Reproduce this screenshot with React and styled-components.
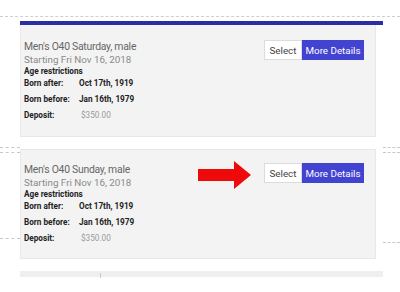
import React from "react";
import styled, { createGlobalStyle } from "styled-components";

const Global = createGlobalStyle`
  html, body { margin: 0; padding: 0; background: #fff; overflow: hidden; }
  body { font-family: Roboto, "Liberation Sans", Arial, sans-serif; }
`;

const Page = styled.div`
  width: 400px;
  height: 292px;
  position: relative;
  overflow: hidden;
  background: #fff;
`;

const TopRule = styled.div`
  height: 17px;
  border-bottom: 1px dashed #cfcfcf;
  box-sizing: border-box;
`;

const Layout = styled.div`
  display: grid;
  grid-template-columns: 20px 363px 17px;
`;

const Gutter = styled.div`
  display: flex;
  flex-direction: column;
`;

const Dash = styled.div`
  margin-top: ${(p) => p.$gap}px;
  border-top: 1px dashed #c8c8c8;
  width: 100%;
`;

const Main = styled.div`
  display: flex;
  flex-direction: column;
  padding-top: 4px;
`;

const BlueBar = styled.div`
  height: 4px;
  background: #2c2ca6;
`;

const Card = styled.div`
  position: relative;
  width: 356px;
  height: ${(p) => p.$h}px;
  box-sizing: border-box;
  background: #f3f3f3;
  border: 1px solid #e8e8e8;
  border-top: ${(p) => (p.$flat ? "none" : "1px solid #e8e8e8")};
  margin-top: ${(p) => p.$mt || 0}px;
  padding: ${(p) => p.$pt}px 11px 0 3px;
  display: flex;
  justify-content: space-between;
  align-items: flex-start;
`;

const Info = styled.div`
  display: flex;
  flex-direction: column;
`;

const Title = styled.div`
  font-size: 10.4px;
  letter-spacing: -0.25px;
  line-height: 14px;
  color: #666;
`;

const Sub = styled.div`
  font-size: 9.8px;
  line-height: 12px;
  color: #8a8a8a;
`;

const Heading = styled.div`
  font-size: 8.2px;
  font-weight: 700;
  line-height: 11px;
  color: #222;
`;

const Row = styled.div`
  display: grid;
  grid-template-columns: 55px auto;
  font-size: 8.2px;
  line-height: 12px;
  margin-top: ${(p) => p.$mt}px;
`;

const Label = styled.span`
  font-weight: 700;
  color: #222;
`;

const Value = styled.span`
  font-weight: ${(p) => (p.$light ? 400 : 700)};
  color: ${(p) => (p.$light ? "#9a9a9a" : "#222")};
  padding-left: ${(p) => (p.$light ? 2 : 0)}px;
`;

const Buttons = styled.div`
  display: flex;
  height: 20px;
`;

const Button = styled.div`
  height: 20px;
  box-sizing: border-box;
  display: flex;
  align-items: center;
  justify-content: center;
  font-size: 9.8px;
  width: ${(p) => p.$w}px;
  background: ${(p) => (p.$primary ? "#4343d2" : "#fff")};
  color: ${(p) => (p.$primary ? "#fff" : "#444")};
  border: 1px solid ${(p) => (p.$primary ? "#4343d2" : "#dcdcdc")};
`;

const Arrow = styled.svg`
  position: absolute;
  left: 177px;
  top: 11px;
`;

const BottomStrip = styled.div`
  margin-top: 12px;
  height: 6px;
  background: #efefef;
  position: relative;
`;

const Tick = styled.div`
  position: absolute;
  left: 80px;
  top: 2px;
  width: 1px;
  height: 5px;
  background: #ccc;
`;

function Event({ title, pt, h, mt, flat, arrow }) {
  return (
    <Card $pt={pt} $h={h} $mt={mt} $flat={flat}>
      <Info>
        <Title>{title}</Title>
        <Sub>Starting Fri Nov 16, 2018</Sub>
        <Heading>Age restrictions</Heading>
        <Row $mt={0}>
          <Label>Born after:</Label>
          <Value>Oct 17th, 1919</Value>
        </Row>
        <Row $mt={4}>
          <Label>Born before:</Label>
          <Value>Jan 16th, 1979</Value>
        </Row>
        <Row $mt={4}>
          <Label>Deposit:</Label>
          <Value $light>$350.00</Value>
        </Row>
      </Info>
      {arrow && (
        <Arrow width="54" height="28" viewBox="0 0 54 28">
          <polygon points="0,8 36,8 36,0 53,14 36,28 36,20 0,20" fill="#ee0a0a" />
        </Arrow>
      )}
      <Buttons>
        <Button $w={38}>Select</Button>
        <Button $w={62} $primary>More Details</Button>
      </Buttons>
    </Card>
  );
}

export default function App() {
  return (
    <Page>
      <Global />
      <TopRule />
      <Layout>
        <Gutter>
          <Dash $gap={130} />
          <Dash $gap={4} />
          <Dash $gap={85} />
        </Gutter>
        <Main>
          <BlueBar />
          <Event title="Men's O40 Saturday, male" pt={15} h={112} flat />
          <Event title="Men's O40 Sunday, male" pt={13} h={110} mt={12} arrow />
          <BottomStrip>
            <Tick />
          </BottomStrip>
        </Main>
        <Gutter>
          <Dash $gap={130} />
          <Dash $gap={4} />
          <Dash $gap={89} />
        </Gutter>
      </Layout>
    </Page>
  );
}
